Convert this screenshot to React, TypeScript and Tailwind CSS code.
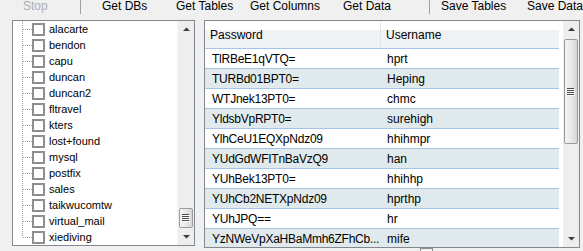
import React from "react";

const dbs = [
  "alacarte",
  "bendon",
  "capu",
  "duncan",
  "duncan2",
  "fltravel",
  "kters",
  "lost+found",
  "mysql",
  "postfix",
  "sales",
  "taikwucomtw",
  "virtual_mail",
  "xiediving",
];

const rows: [string, string][] = [
  ["TlRBeE1qVTQ=", "hprt"],
  ["TURBd01BPT0=", "Heping"],
  ["WTJnek13PT0=", "chmc"],
  ["YldsbVpRPT0=", "surehigh"],
  ["YlhCeU1EQXpNdz09", "hhihmpr"],
  ["YUdGdWFITnBaVzQ9", "han"],
  ["YUhBek13PT0=", "hhihhp"],
  ["YUhCb2NETXpNdz09", "hprthp"],
  ["YUhJPQ==", "hr"],
  ["YzNWeVpXaHBaMmh6ZFhCb...", "mife"],
];

function Arrow({ up }: { up: boolean }) {
  return (
    <svg width="7" height="5" viewBox="0 0 7 5">
      {up ? (
        <polygon points="0,4 3.5,0.5 7,4" fill="#3c3c3c" />
      ) : (
        <polygon points="0,1 3.5,4.5 7,1" fill="#3c3c3c" />
      )}
    </svg>
  );
}

function Grip() {
  return (
    <svg width="8" height="8" viewBox="0 0 8 8">
      {[0, 2, 4, 6].map((y) => (
        <g key={y}>
          <line x1="0" y1={y + 0.5} x2="7" y2={y + 0.5} stroke="#4a4a4a" strokeWidth="1" />
          <line x1="1" y1={y + 1.5} x2="8" y2={y + 1.5} stroke="#ffffff" strokeWidth="1" />
        </g>
      ))}
    </svg>
  );
}

function Thumb({ h }: { h: string }) {
  return (
    <div
      className={`${h} mx-[1px] rounded-[2px] border border-[#9a9a9a] bg-[linear-gradient(to_right,#f4f4f4,#e9e9e9_50%,#d6d6d6)] flex items-center justify-center`}
    >
      <Grip />
    </div>
  );
}

function TreeLine({ last }: { last: boolean }) {
  return (
    <svg width="10" height="16" viewBox="0 0 10 16" className="shrink-0">
      <line
        x1="0.5"
        y1="0"
        x2="0.5"
        y2={last ? 8 : 16}
        stroke="#a0a0a0"
        strokeWidth="1"
        strokeDasharray="1 1"
      />
      <line x1="1" y1="8.5" x2="10" y2="8.5" stroke="#a0a0a0" strokeWidth="1" strokeDasharray="1 1" />
    </svg>
  );
}

export default function App() {
  return (
    <div className="w-[583px] h-[251px] overflow-hidden bg-[#f0f0f0] font-['Liberation_Sans',Arial,sans-serif] text-black">
      {/* toolbar */}
      <div className="h-[14px] flex items-start text-[12px] leading-[14px] whitespace-nowrap">
        <div className="w-[57px] ml-[23px] -mt-[1px] text-[#a9afb8]">Stop</div>
        <div className="w-px h-[14px] bg-[#a0a0a0]" />
        <div className="w-[74px] ml-[21px] -mt-[1px]">Get DBs</div>
        <div className="w-[74px] -mt-[1px]">Get Tables</div>
        <div className="w-[93px] -mt-[1px]">Get Columns</div>
        <div className="w-[86px] -mt-[1px]">Get Data</div>
        <div className="w-px h-[14px] bg-[#a0a0a0]" />
        <div className="w-[86px] ml-[11px] -mt-[1px]">Save Tables</div>
        <div className="-mt-[1px]">Save Data</div>
      </div>

      <div className="mt-[6px] flex items-start">
        {/* left tree */}
        <div className="ml-[12px] w-[183px] h-[226px] border border-[#828790] bg-white flex">
          <div className="flex-1 pl-[9px] text-[11px] leading-[16px]">
            {dbs.map((d, i) => (
              <div key={d} className="h-[16px] flex items-center">
                <TreeLine last={i === dbs.length - 1} />
                <div className="w-[13px] h-[13px] border-2 border-[#8e8e8e] bg-white shrink-0" />
                <span className="ml-[4px]">{d}</span>
              </div>
            ))}
          </div>
          <div className="w-[17px] bg-[#eeeeee] border-l border-[#f7f7f7] flex flex-col">
            <div className="h-[17px] flex items-center justify-center">
              <Arrow up />
            </div>
            <div className="flex-1 flex flex-col justify-end">
              <Thumb h="h-[20px]" />
            </div>
            <div className="h-[17px] flex items-center justify-center">
              <Arrow up={false} />
            </div>
          </div>
        </div>

        {/* right table */}
        <div className="ml-[9px] w-[376px] h-[228px] border border-[#828790] bg-white flex overflow-hidden">
          <div className="w-[354px] text-[12px]">
            <div className="h-[28px] flex border-b border-[#a5c4ec] bg-[linear-gradient(to_bottom,#ffffff_0%,#ffffff_34%,#f1f2f4_34%,#f1f2f4_100%)]">
              <div className="w-[176px] pl-[5px] flex items-center border-r border-[#e3e5e8]">Password</div>
              <div className="flex-1 pl-[5px] flex items-center">Username</div>
            </div>
            {rows.map(([p, u], i) => (
              <div
                key={p}
                className={`h-[20px] flex items-center border-b border-[#a5c4ec] ${
                  i % 2 === 1 ? "bg-[#e0eaec]" : "bg-white"
                }`}
              >
                <div className="w-[176px] pl-[7px] whitespace-nowrap overflow-hidden tracking-[-0.25px]">{p}</div>
                <div className="flex-1 pl-[6px] whitespace-nowrap">{u}</div>
              </div>
            ))}
          </div>
          <div className="w-[4px]" />
          <div className="w-[16px] bg-[#eeeeee] flex flex-col">
            <div className="h-[17px] shrink-0 flex items-center justify-center">
              <Arrow up />
            </div>
            <div className="flex-1 flex flex-col">
              <div className="mt-[1px]">
                <Thumb h="h-[105px]" />
              </div>
            </div>
            <div className="h-[17px] shrink-0 flex items-center justify-center">
              <Arrow up={false} />
            </div>
          </div>
        </div>
      </div>

      <div className="ml-[420px] w-[13px] h-[13px] border border-[#8e8e8e] bg-[#f4f4f4]" />
    </div>
  );
}
